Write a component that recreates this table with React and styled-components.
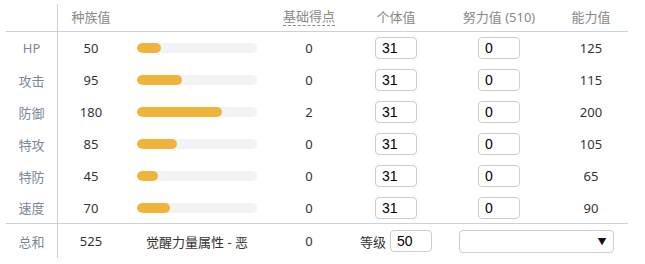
import React from "react";
import styled, { createGlobalStyle } from "styled-components";

const GlobalStyle = createGlobalStyle`
  body {
    margin: 0;
    background: #fff;
    font-family: "Noto Sans", "Noto Sans CJK SC", sans-serif;
  }
`;

const COLS = "52px 66px 146px 78px 96px 110px 74px";
const MAX_STAT = 255;

const Wrap = styled.div`
  padding: 4px 6px 0;
  width: 622px;
`;

const Row = styled.div`
  display: grid;
  grid-template-columns: ${COLS};
  height: ${(p) => p.$h || 32}px;
  border-bottom: ${(p) => (p.$line ? "1px solid #ccd2dc" : "none")};
  box-sizing: border-box;
  font-size: 13px;
  color: #333;
`;

const Cell = styled.div`
  display: flex;
  align-items: center;
  justify-content: ${(p) => p.$align || "center"};
  gap: 4px;
  grid-column: ${(p) => p.$span || "auto"};
  white-space: nowrap;
`;

const Label = styled(Cell)`
  color: #7d8796;
  border-right: 1px solid #ccd2dc;
`;

const Head = styled(Cell)`
  color: #888;
  padding-bottom: 2px;
`;

const Dotted = styled.span`
  display: inline-block;
  border-bottom: 1px dashed #8a8a8a;
  line-height: 16px;
  padding-bottom: 1px;
`;

const Track = styled.div`
  width: 120px;
  height: 10px;
  border-radius: 5px;
  background: #f3f3f3;
  overflow: hidden;
`;

const Fill = styled.div`
  height: 100%;
  border-radius: 5px;
  background: #f0b43c;
`;

const Box = styled.input`
  width: 42px;
  height: 22px;
  box-sizing: border-box;
  border: 1px solid #ccc;
  border-radius: 4px;
  padding: 0 6px;
  font-family: "Liberation Sans", Arial, sans-serif;
  font-size: 14px;
  color: #000;
  outline: none;
`;

const Select = styled.div`
  width: 155px;
  height: 23px;
  box-sizing: border-box;
  border: 1px solid #ccc;
  border-radius: 4px;
  display: flex;
  align-items: center;
  justify-content: flex-end;
  padding-right: 6px;
  font-size: 9px;
  color: #111;
`;

const stats = [
  ["HP", 50, 0, 125],
  ["攻击", 95, 0, 115],
  ["防御", 180, 2, 200],
  ["特攻", 85, 0, 105],
  ["特防", 45, 0, 65],
  ["速度", 70, 0, 90],
];

const App = () => (
  <>
    <GlobalStyle />
    <Wrap>
      <Row $h={28} $line>
        <Label />
        <Head>种族值</Head>
        <Head />
        <Head>
          <Dotted>基础得点</Dotted>
        </Head>
        <Head>个体值</Head>
        <Head>努力值 (510)</Head>
        <Head>能力值</Head>
      </Row>
      {stats.map(([name, base, ev, total], i) => (
        <Row key={name} $line={i === stats.length - 1}>
          <Label>{name}</Label>
          <Cell>{base}</Cell>
          <Cell>
            <Track>
              <Fill style={{ width: `${(base / MAX_STAT) * 100}%` }} />
            </Track>
          </Cell>
          <Cell>{ev}</Cell>
          <Cell>
            <Box defaultValue="31" />
          </Cell>
          <Cell>
            <Box defaultValue="0" />
          </Cell>
          <Cell>{total}</Cell>
        </Row>
      ))}
      <Row $h={34}>
        <Label>总和</Label>
        <Cell>525</Cell>
        <Cell>觉醒力量属性 - 恶</Cell>
        <Cell>0</Cell>
        <Cell>
          等级
          <Box defaultValue="50" />
        </Cell>
        <Cell $span="span 2">
          <Select>▼</Select>
        </Cell>
      </Row>
    </Wrap>
  </>
);

export default App;
